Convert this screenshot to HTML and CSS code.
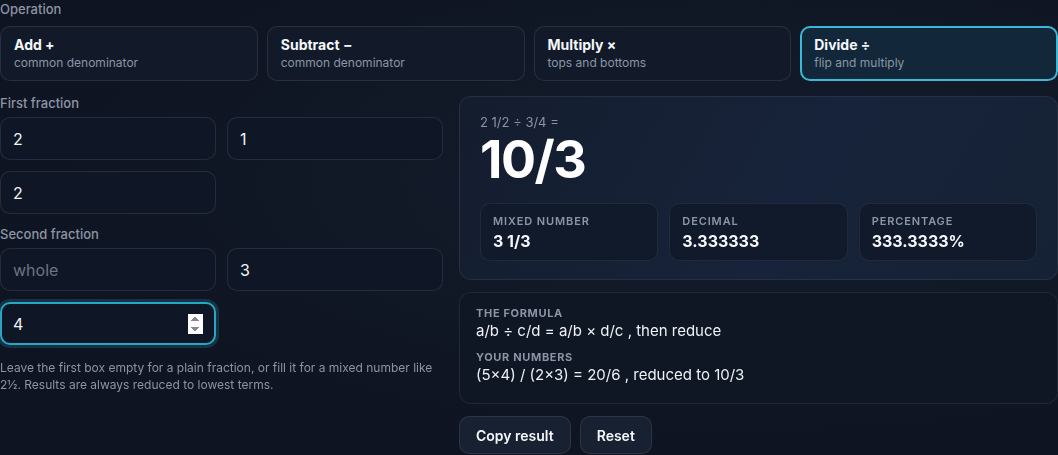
FILE: index.html
```html
<!DOCTYPE html>
<html>
<head>
<meta charset="utf-8">
<link rel="stylesheet" href="styles.css">
</head>
<body>
<div class="app">
  <div class="label">Operation</div>
  <div class="ops">
    <button class="op"><span class="op-title">Add +</span><span class="op-sub">common denominator</span></button>
    <button class="op"><span class="op-title">Subtract −</span><span class="op-sub">common denominator</span></button>
    <button class="op"><span class="op-title">Multiply ×</span><span class="op-sub">tops and bottoms</span></button>
    <button class="op active"><span class="op-title">Divide ÷</span><span class="op-sub">flip and multiply</span></button>
  </div>
  <div class="main">
    <div class="left">
      <div class="label">First fraction</div>
      <div class="inputs">
        <input class="num" type="number" value="2">
        <input class="num" type="number" value="1">
        <input class="num" type="number" value="2">
      </div>
      <div class="label second">Second fraction</div>
      <div class="inputs">
        <input class="num" type="number" placeholder="whole">
        <input class="num" type="number" value="3">
        <input class="num" type="number" value="4" autofocus>
      </div>
      <p class="help">Leave the first box empty for a plain fraction, or fill it for a mixed number like 2½. Results are always reduced to lowest terms.</p>
    </div>
    <div class="right">
      <div class="result">
        <div class="expr">2 1/2 ÷ 3/4 =</div>
        <div class="big">10/3</div>
        <div class="stats">
          <div class="stat"><div class="stat-label">Mixed number</div><div class="stat-value">3 1/3</div></div>
          <div class="stat"><div class="stat-label">Decimal</div><div class="stat-value">3.333333</div></div>
          <div class="stat"><div class="stat-label">Percentage</div><div class="stat-value">333.3333%</div></div>
        </div>
      </div>
      <div class="formula">
        <div class="f-label">The formula</div>
        <div class="f-text">a/b ÷ c/d = a/b × d/c , then reduce</div>
        <div class="f-label f-gap">Your numbers</div>
        <div class="f-text">(5×4) / (2×3) = 20/6 , reduced to 10/3</div>
      </div>
      <div class="actions">
        <button class="btn">Copy result</button>
        <button class="btn">Reset</button>
      </div>
    </div>
  </div>
</div>
</body>
</html>
```

FILE: styles.css
```css
* { box-sizing: border-box; }
html, body { margin: 0; padding: 0; }
body {
  background: radial-gradient(ellipse at 70% 40%, #141d2d 0%, #0f1522 60%, #0d1320 100%);
  background-color: #0f1522;
  color: #f1f5f9;
  font-family: Inter, "Noto Sans", sans-serif;
  height: 455px;
  overflow: hidden;
}
.app { width: 1058px; }
.label {
  font-size: 13px;
  line-height: 18px;
  font-weight: 500;
  color: #8b95a6;
}
.ops {
  display: grid;
  grid-template-columns: repeat(4, 1fr);
  gap: 9px;
  margin-top: 8px;
}
.op {
  display: flex;
  flex-direction: column;
  align-items: flex-start;
  height: 55px;
  padding: 9px 13px 0;
  border: 1px solid rgba(148, 163, 184, 0.16);
  border-radius: 10px;
  background: #121a29;
  font-family: inherit;
  text-align: left;
}
.op-title {
  font-size: 14px;
  line-height: 18px;
  font-weight: 700;
  color: #f5f7fa;
}
.op-sub {
  margin-top: 1px;
  font-size: 12px;
  line-height: 16px;
  color: #8b95a6;
}
.op.active {
  border: 2px solid #3bb8d6;
  background: #12283a;
  padding: 8px 12px 0;
}
.main {
  display: grid;
  grid-template-columns: 444px 1fr;
  gap: 15px;
  margin-top: 13px;
}
.inputs {
  display: grid;
  grid-template-columns: 216px 216px;
  column-gap: 11px;
  row-gap: 11px;
  margin-top: 5px;
}
.label.second { margin-top: 11px; }
.num {
  height: 43px;
  width: 216px;
  padding: 0 12px;
  border: 1px solid rgba(148, 163, 184, 0.16);
  border-radius: 10px;
  background: #0f1625;
  color: #f1f5f9;
  font-family: inherit;
  font-size: 16px;
  outline: none;
}
.num::placeholder { color: #6b7587; }
.num:not(:focus)::-webkit-inner-spin-button,
.num:not(:focus)::-webkit-outer-spin-button { -webkit-appearance: none; margin: 0; }
.num:focus {
  border: 2px solid #2aa6c2;
  padding: 0 11px;
  box-shadow: 0 0 0 3px rgba(42, 166, 194, 0.22);
}
.help {
  margin: 14px 0 0;
  font-size: 12px;
  line-height: 17px;
  color: #8b95a6;
}
.right { padding-top: 2px; }
.result {
  border: 1px solid rgba(148, 163, 184, 0.13);
  border-radius: 12px;
  background: linear-gradient(120deg, #141d2e 0%, #17233a 55%, #152134 100%);
  padding: 16px 20px 18px;
}
.expr {
  font-size: 13px;
  line-height: 18px;
  color: #8b95a6;
}
.big {
  font-size: 52px;
  line-height: 57px;
  font-weight: 700;
  letter-spacing: -1.5px;
  color: #ffffff;
}
.stats {
  display: grid;
  grid-template-columns: repeat(3, 1fr);
  gap: 11px;
  margin-top: 15px;
}
.stat {
  height: 58px;
  padding: 10px 12px 0;
  border: 1px solid rgba(148, 163, 184, 0.12);
  border-radius: 10px;
  background: #111a2a;
}
.stat-label {
  font-size: 11px;
  line-height: 14px;
  font-weight: 600;
  letter-spacing: 0.08em;
  text-transform: uppercase;
  color: #8b95a6;
}
.stat-value {
  margin-top: 3px;
  font-size: 16px;
  line-height: 20px;
  font-weight: 700;
  color: #f5f7fa;
}
.formula {
  margin-top: 12px;
  border: 1px solid rgba(148, 163, 184, 0.13);
  border-radius: 12px;
  background: #0f1624;
  padding: 13px 16px 18px;
}
.f-label {
  font-size: 11px;
  line-height: 14px;
  font-weight: 700;
  letter-spacing: 0.06em;
  text-transform: uppercase;
  color: #8b95a6;
}
.f-gap { margin-top: 9px; }
.f-text {
  margin-top: 1px;
  font-size: 15px;
  line-height: 20px;
  color: #eef2f7;
}
.actions {
  display: flex;
  gap: 9px;
  margin-top: 12px;
}
.btn {
  height: 38px;
  padding: 0 16px;
  border: 1px solid rgba(148, 163, 184, 0.16);
  border-radius: 10px;
  background: #172131;
  color: #f5f7fa;
  font-family: inherit;
  font-size: 14px;
  font-weight: 600;
}
```
